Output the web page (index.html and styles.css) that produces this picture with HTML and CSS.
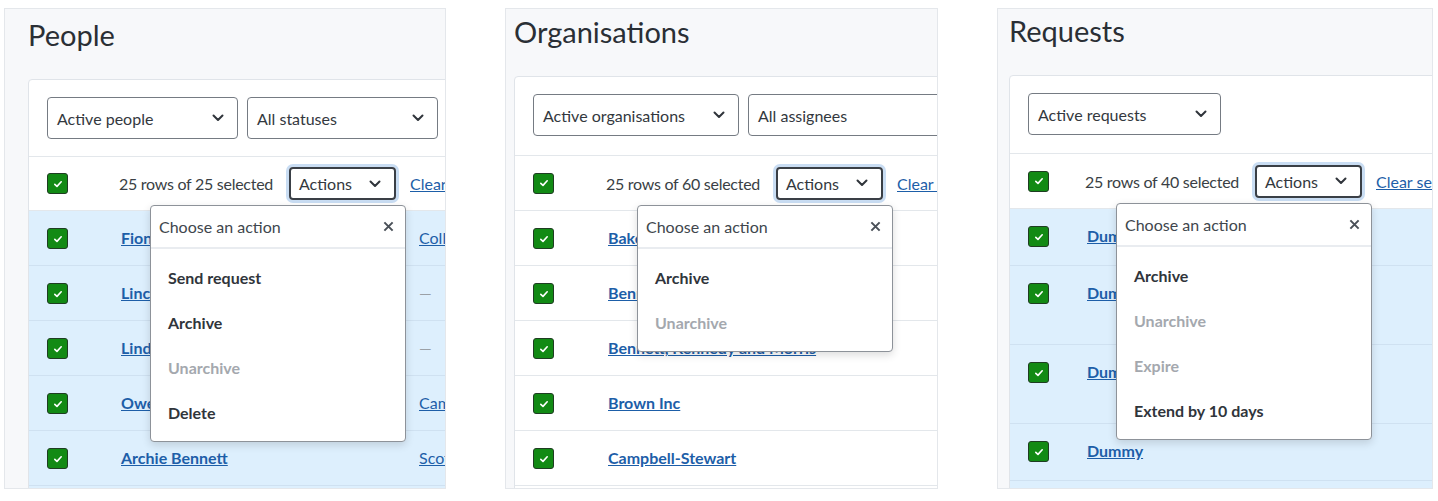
FILE: index.html
```html
<!DOCTYPE html>
<html lang="en">
<head>
  <meta charset="UTF-8">
  <meta name="viewport" content="width=device-width, initial-scale=1.0">
  <title>Bulk actions</title>
  <link rel="stylesheet" href="styles.css">
</head>
<body>
  <div class="board">

    <!-- People -->
    <section class="panel panel--people">
      <h2 class="panel-title">People</h2>
      <div class="card">
        <div class="filters">
          <div class="select">Active people <svg class="chevron" viewBox="0 0 12 8"><path d="M1.5 1.5L6 6l4.5-4.5"/></svg></div>
          <div class="select">All statuses <svg class="chevron" viewBox="0 0 12 8"><path d="M1.5 1.5L6 6l4.5-4.5"/></svg></div>
        </div>
        <div class="selection">
          <span class="checkbox"><svg viewBox="0 0 12 12"><path d="M2.8 6.3l2.2 2.1 4.2-4.6"/></svg></span>
          <span class="selection-count">25 rows of 25 selected</span>
          <div class="actions">
            <div class="actions-select">Actions <svg class="chevron" viewBox="0 0 12 8"><path d="M1.5 1.5L6 6l4.5-4.5"/></svg></div>
            <div class="popover">
              <div class="popover-header">Choose an action <svg class="close" viewBox="0 0 12 12"><path d="M1.5 1.5l9 9M10.5 1.5l-9 9"/></svg></div>
              <ul class="popover-list">
                <li class="popover-item">Send request</li>
                <li class="popover-item">Archive</li>
                <li class="popover-item is-disabled">Unarchive</li>
                <li class="popover-item">Delete</li>
              </ul>
            </div>
          </div>
          <a class="clear-link" href="#">Clear selection</a>
        </div>
        <div class="rows rows--tinted">
          <div class="row"><span class="checkbox"><svg viewBox="0 0 12 12"><path d="M2.8 6.3l2.2 2.1 4.2-4.6"/></svg></span><a class="name-link" href="#">Fiona Walsh</a><a class="side-link" href="#">Collier-Reid</a></div>
          <div class="row"><span class="checkbox"><svg viewBox="0 0 12 12"><path d="M2.8 6.3l2.2 2.1 4.2-4.6"/></svg></span><a class="name-link" href="#">Lincoln Hart</a><span class="empty">—</span></div>
          <div class="row"><span class="checkbox"><svg viewBox="0 0 12 12"><path d="M2.8 6.3l2.2 2.1 4.2-4.6"/></svg></span><a class="name-link" href="#">Lindsay Moore</a><span class="empty">—</span></div>
          <div class="row"><span class="checkbox"><svg viewBox="0 0 12 12"><path d="M2.8 6.3l2.2 2.1 4.2-4.6"/></svg></span><a class="name-link" href="#">Owen Price</a><a class="side-link" href="#">Campbell-Stewart</a></div>
          <div class="row"><span class="checkbox"><svg viewBox="0 0 12 12"><path d="M2.8 6.3l2.2 2.1 4.2-4.6"/></svg></span><a class="name-link" href="#">Archie Bennett</a><a class="side-link" href="#">Scott Ltd</a></div>
          <div class="row"><span class="checkbox"><svg viewBox="0 0 12 12"><path d="M2.8 6.3l2.2 2.1 4.2-4.6"/></svg></span><a class="name-link" href="#">Bella Carter</a><a class="side-link" href="#">Brown Inc</a></div>
        </div>
      </div>
    </section>

    <!-- Organisations -->
    <section class="panel panel--orgs">
      <h2 class="panel-title">Organisations</h2>
      <div class="card">
        <div class="filters">
          <div class="select">Active organisations <svg class="chevron" viewBox="0 0 12 8"><path d="M1.5 1.5L6 6l4.5-4.5"/></svg></div>
          <div class="select select--wide">All assignees <svg class="chevron" viewBox="0 0 12 8"><path d="M1.5 1.5L6 6l4.5-4.5"/></svg></div>
        </div>
        <div class="selection">
          <span class="checkbox"><svg viewBox="0 0 12 12"><path d="M2.8 6.3l2.2 2.1 4.2-4.6"/></svg></span>
          <span class="selection-count">25 rows of 60 selected</span>
          <div class="actions">
            <div class="actions-select">Actions <svg class="chevron" viewBox="0 0 12 8"><path d="M1.5 1.5L6 6l4.5-4.5"/></svg></div>
            <div class="popover">
              <div class="popover-header">Choose an action <svg class="close" viewBox="0 0 12 12"><path d="M1.5 1.5l9 9M10.5 1.5l-9 9"/></svg></div>
              <ul class="popover-list">
                <li class="popover-item">Archive</li>
                <li class="popover-item is-disabled">Unarchive</li>
              </ul>
            </div>
          </div>
          <a class="clear-link" href="#">Clear selection</a>
        </div>
        <div class="rows">
          <div class="row"><span class="checkbox"><svg viewBox="0 0 12 12"><path d="M2.8 6.3l2.2 2.1 4.2-4.6"/></svg></span><a class="name-link" href="#">Baker Group</a></div>
          <div class="row"><span class="checkbox"><svg viewBox="0 0 12 12"><path d="M2.8 6.3l2.2 2.1 4.2-4.6"/></svg></span><a class="name-link" href="#">Bennett Ltd</a></div>
          <div class="row"><span class="checkbox"><svg viewBox="0 0 12 12"><path d="M2.8 6.3l2.2 2.1 4.2-4.6"/></svg></span><a class="name-link" href="#">Bennett, Kennedy and Morris</a></div>
          <div class="row"><span class="checkbox"><svg viewBox="0 0 12 12"><path d="M2.8 6.3l2.2 2.1 4.2-4.6"/></svg></span><a class="name-link" href="#">Brown Inc</a></div>
          <div class="row"><span class="checkbox"><svg viewBox="0 0 12 12"><path d="M2.8 6.3l2.2 2.1 4.2-4.6"/></svg></span><a class="name-link" href="#">Campbell-Stewart</a></div>
          <div class="row"><span class="checkbox"><svg viewBox="0 0 12 12"><path d="M2.8 6.3l2.2 2.1 4.2-4.6"/></svg></span><a class="name-link" href="#">Carter LLC</a></div>
        </div>
      </div>
    </section>

    <!-- Requests -->
    <section class="panel panel--requests">
      <h2 class="panel-title">Requests</h2>
      <div class="card">
        <div class="filters">
          <div class="select">Active requests <svg class="chevron" viewBox="0 0 12 8"><path d="M1.5 1.5L6 6l4.5-4.5"/></svg></div>
        </div>
        <div class="selection">
          <span class="checkbox"><svg viewBox="0 0 12 12"><path d="M2.8 6.3l2.2 2.1 4.2-4.6"/></svg></span>
          <span class="selection-count">25 rows of 40 selected</span>
          <div class="actions">
            <div class="actions-select">Actions <svg class="chevron" viewBox="0 0 12 8"><path d="M1.5 1.5L6 6l4.5-4.5"/></svg></div>
            <div class="popover">
              <div class="popover-header">Choose an action <svg class="close" viewBox="0 0 12 12"><path d="M1.5 1.5l9 9M10.5 1.5l-9 9"/></svg></div>
              <ul class="popover-list">
                <li class="popover-item">Archive</li>
                <li class="popover-item is-disabled">Unarchive</li>
                <li class="popover-item is-disabled">Expire</li>
                <li class="popover-item">Extend by 10 days</li>
              </ul>
            </div>
          </div>
          <a class="clear-link" href="#">Clear selection</a>
        </div>
        <div class="rows rows--tinted">
          <div class="row"><span class="checkbox"><svg viewBox="0 0 12 12"><path d="M2.8 6.3l2.2 2.1 4.2-4.6"/></svg></span><a class="name-link" href="#">Dummy</a></div>
          <div class="row row--tall"><span class="checkbox"><svg viewBox="0 0 12 12"><path d="M2.8 6.3l2.2 2.1 4.2-4.6"/></svg></span><a class="name-link" href="#">Dummy</a></div>
          <div class="row row--tall"><span class="checkbox"><svg viewBox="0 0 12 12"><path d="M2.8 6.3l2.2 2.1 4.2-4.6"/></svg></span><a class="name-link" href="#">Dummy</a></div>
          <div class="row"><span class="checkbox"><svg viewBox="0 0 12 12"><path d="M2.8 6.3l2.2 2.1 4.2-4.6"/></svg></span><a class="name-link" href="#">Dummy</a></div>
          <div class="row"><span class="checkbox"><svg viewBox="0 0 12 12"><path d="M2.8 6.3l2.2 2.1 4.2-4.6"/></svg></span><a class="name-link" href="#">Dummy</a></div>
        </div>
      </div>
    </section>

  </div>
</body>
</html>
```

FILE: styles.css
```css
* {
  box-sizing: border-box;
}

body {
  margin: 0;
  padding: 8px 0 0 4px;
  font-family: Lato, "Noto Sans", sans-serif;
  font-size: 16px;
  color: #2f343a;
  background-color: #fff;
}

.board {
  display: flex;
  gap: 59px;
}

/* Panels are cropped views, content runs off the right edge */
.panel {
  height: 481px;
  background-color: #f7f8fa;
  border: 1px solid #e4e7eb;
  overflow: hidden;
}

.panel--people {
  width: 442px;
  padding: 8px 0 0 23px;
  --check-col: 74px;
  --name-col: 298px;
  --select-w: 191px;
  --filters-pb: 17px;
  --selection-h: 54px;
  --row-h: 55px;
}

.panel--orgs {
  width: 433px;
  padding: 5px 0 0 8px;
  --check-col: 75px;
  --name-col: 298px;
  --select-w: 206px;
  --filters-pb: 19px;
  --selection-h: 55px;
  --row-h: 55px;
}

.panel--requests {
  width: 436px;
  padding: 4px 0 0 11px;
  --check-col: 59px;
  --name-col: 298px;
  --select-w: 193px;
  --filters-pb: 18px;
  --selection-h: 55px;
  --row-h: 57px;
}

.panel-title {
  margin: 0 0 26px;
  font-size: 29px;
  font-weight: 400;
  line-height: 36px;
  color: #2a2f35;
}

.card {
  width: 640px;
  height: 420px;
  background-color: #fff;
  border: 1px solid #e0e4e9;
  border-radius: 4px 0 0 0;
}

.filters {
  display: flex;
  gap: 9px;
  padding: 17px 18px var(--filters-pb);
  border-bottom: 1px solid #e3e7eb;
}

.select {
  flex: none;
  width: var(--select-w);
  height: 42px;
  display: flex;
  align-items: center;
  justify-content: space-between;
  padding: 0 13px 0 9px;
  border: 1px solid #757b83;
  border-radius: 4px;
  color: #33383e;
}

.select--wide {
  width: 240px;
}

.chevron {
  width: 12px;
  height: 8px;
  fill: none;
  stroke: #30353b;
  stroke-width: 2;
  stroke-linecap: round;
  stroke-linejoin: round;
}

.selection {
  display: flex;
  align-items: center;
  height: var(--selection-h);
  padding: 0 18px;
  border-bottom: 1px solid #e3e7eb;
}

.selection-count {
  margin-left: calc(var(--check-col) - 23px);
  margin-right: 16px;
  letter-spacing: -0.27px;
  color: #3a3f45;
  white-space: nowrap;
}

.checkbox {
  flex: none;
  width: 21px;
  height: 21px;
  display: flex;
  align-items: center;
  justify-content: center;
  background-color: #128a14;
  border: 1.5px solid #1f3d22;
  border-radius: 3px;
}

.checkbox svg {
  width: 12px;
  height: 12px;
  fill: none;
  stroke: #fff;
  stroke-width: 1.6;
  stroke-linecap: round;
  stroke-linejoin: round;
}

.actions {
  position: relative;
  margin-right: 14px;
}

.actions-select {
  width: 107px;
  height: 33px;
  display: flex;
  align-items: center;
  justify-content: space-between;
  padding: 0 13px 0 8px;
  border: 2px solid #3a3f46;
  border-radius: 4px;
  box-shadow: 0 0 0 3px #c9ddf3;
  color: #33383e;
}

.clear-link {
  color: #1d5ea8;
  white-space: nowrap;
}

.popover {
  position: absolute;
  top: calc(100% + 5px);
  right: -10px;
  z-index: 5;
  width: 256px;
  background-color: #fff;
  border: 1px solid #8d9299;
  border-radius: 4px;
  box-shadow: 0 3px 9px rgba(0, 0, 0, 0.14);
}

.popover-header {
  height: 43px;
  display: flex;
  align-items: center;
  justify-content: space-between;
  padding: 0 11px 0 8px;
  border-bottom: 2px solid #e9ecf0;
  color: #40464d;
}

.close {
  width: 11px;
  height: 11px;
  fill: none;
  stroke: #4a5058;
  stroke-width: 2.2;
}

.popover-list {
  list-style: none;
  margin: 0;
  padding: 6px 0;
}

.popover-item {
  height: 45px;
  line-height: 45px;
  padding-left: 17px;
  font-weight: 700;
  color: #30353b;
}

.popover-item.is-disabled {
  color: #a4a8ae;
}

.row {
  display: grid;
  grid-template-columns: var(--check-col) var(--name-col) auto;
  align-items: start;
  height: var(--row-h);
  padding: 15px 18px 0;
  border-bottom: 1px solid #e3e7eb;
  white-space: nowrap;
}

.row .checkbox {
  margin-top: 2px;
}

.row--tall {
  height: 79px;
}

.rows--tinted .row {
  background-color: #ddeffd;
  border-bottom-color: #cfe1f1;
}

.name-link,
.side-link {
  line-height: 24px;
  color: #1d5ea8;
  font-weight: 700;
}

.side-link {
  font-weight: 400;
}

.empty {
  line-height: 24px;
  color: #9aa0a6;
}
```
